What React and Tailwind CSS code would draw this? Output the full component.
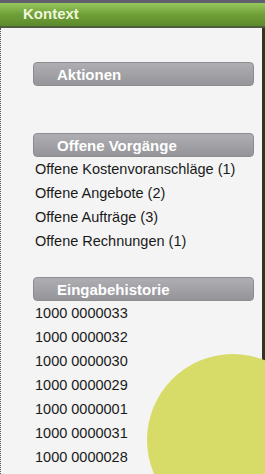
export default function App() {
  const vorgaenge = [
    'Offene Kostenvoranschläge (1)',
    'Offene Angebote (2)',
    'Offene Aufträge (3)',
    'Offene Rechnungen (1)',
  ]
  const historie = [
    '1000 0000033',
    '1000 0000032',
    '1000 0000030',
    '1000 0000029',
    '1000 0000001',
    '1000 0000031',
    '1000 0000028',
  ]

  const SectionHeader = ({ title }) => (
    <div className="h-[24px] rounded-[4px] border border-[#8c8c90] bg-gradient-to-b from-[#afafb3] via-[#a2a2a6] to-[#959599] pl-[23px] flex items-center text-[15px] font-bold text-white leading-none">
      {title}
    </div>
  )

  return (
    <div
      className="w-[265px] h-[474px] overflow-hidden relative bg-[#f4f4f4] flex flex-col"
      style={{ fontFamily: '"Liberation Sans", Arial, sans-serif' }}
    >
      {/* Kontext bar */}
      <div className="h-[28px] shrink-0 flex flex-col">
        <div className="h-[3px] bg-[#5f5f6d]" />
        <div className="flex-1 bg-gradient-to-b from-[#97c95e] via-[#6f9f38] to-[#5c8a2c] flex items-center pl-[23px] text-[15px] font-bold text-[#eef6dc]">
          Kontext
        </div>
        <div className="h-[2px] bg-[#4e5e3c]" />
      </div>

      {/* body */}
      <div className="flex-1 relative border-r-[3px] border-[#33361f]">
        <div className="absolute inset-0 border-l border-dotted border-[#555]" />
        {/* decorative circle */}
        <div className="absolute left-[147px] top-[326px] w-[172px] h-[172px] rounded-full bg-[#d7dc69]" />

        <div className="relative pl-[33px] pr-[8px] pt-[34px] text-[14.5px] text-[#1a1a1a]">
          <SectionHeader title="Aktionen" />

          <div className="mt-[47px]">
            <SectionHeader title="Offene Vorgänge" />
            <ul className="pl-[2px]">
              {vorgaenge.map((v) => (
                <li key={v} className="h-[24px] leading-[24px] whitespace-nowrap">
                  {v}
                </li>
              ))}
            </ul>
          </div>

          <div className="mt-[24px]">
            <SectionHeader title="Eingabehistorie" />
            <ul className="pl-[2px]">
              {historie.map((h) => (
                <li key={h} className="h-[24px] leading-[24px]">
                  {h}
                </li>
              ))}
            </ul>
          </div>
        </div>
      </div>
    </div>
  )
}
